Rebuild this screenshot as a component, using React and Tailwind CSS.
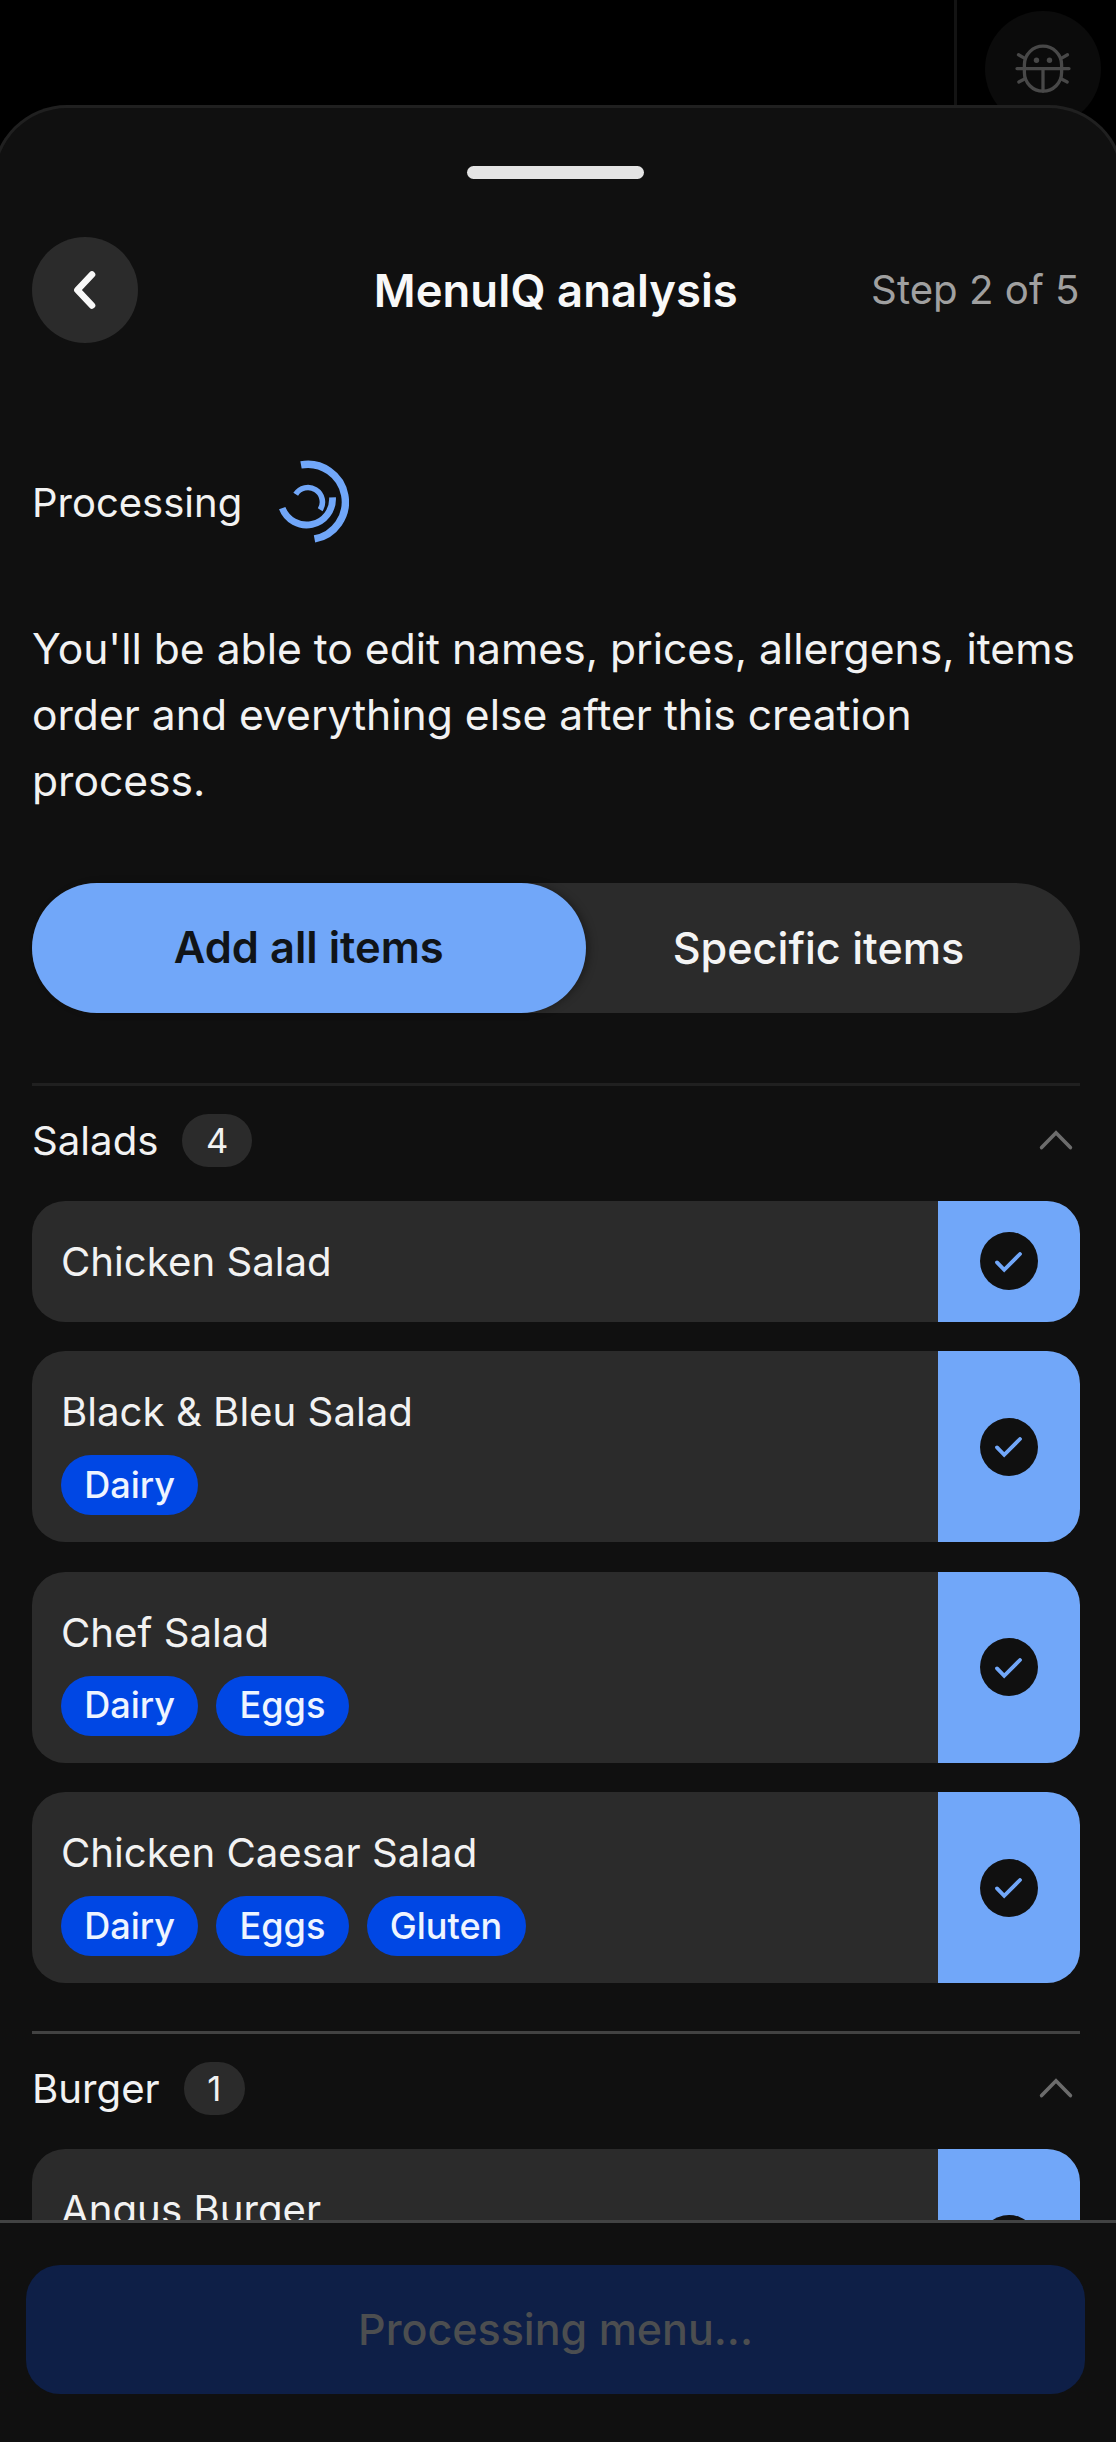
import { useState } from 'react';

const sections = [
  {
    name: 'Salads',
    count: 4,
    line: 'border-[#202020]',
    items: [
      { name: 'Chicken Salad', allergens: [] },
      { name: 'Black & Bleu Salad', allergens: ['Dairy'] },
      { name: 'Chef Salad', allergens: ['Dairy', 'Eggs'] },
      { name: 'Chicken Caesar Salad', allergens: ['Dairy', 'Eggs', 'Gluten'] },
    ],
  },
  {
    name: 'Burger',
    count: 1,
    line: 'border-[#424242]',
    items: [{ name: 'Angus Burger', allergens: [], tall: true }],
  },
];

function BugIcon() {
  return (
    <svg width="56" height="50" viewBox="0 0 56 50" fill="none" stroke="#484848" strokeWidth="3.3" strokeLinecap="round">
      <rect x="9.4" y="2.2" width="37.2" height="45" rx="18.6" />
      <path d="M2 24.6H54M28 24.6V47" />
      <path d="M3.5 10.8 9.8 14.4M52.5 10.8 46.2 14.4M3.8 38 10 34.8M52.2 38 46 34.8" />
      <circle cx="21.5" cy="16.2" r="2.7" fill="#484848" stroke="none" />
      <circle cx="34.5" cy="16.2" r="2.7" fill="#484848" stroke="none" />
    </svg>
  );
}

function Spinner() {
  return (
    <svg width="84" height="84" viewBox="-42 -42 84 84" fill="none" stroke="#71a7f9">
      <path d="M-6 -37.1A37.6 37.6 0 0 1 7.5 36.9" strokeWidth="7.4" />
      <path d="M25.5 -5.2A26 26 0 0 1 -24.8 5.5" strokeWidth="6.8" transform="translate(0 0.6)" />
      <path d="M-11.3 -7.4A13.5 13.5 0 0 1 13.2 8" strokeWidth="5.6" transform="translate(0 -0.3)" />
    </svg>
  );
}

function MenuItem({ item }) {
  const hasAllergens = item.allergens.length > 0;

  return (
    <div className={`flex shrink-0 overflow-hidden rounded-[33px] bg-[#2b2b2b] ${item.tall ? 'h-[191px]' : ''}`}>
      <div className={`flex-1 pl-[29px] pt-[33px] ${hasAllergens ? 'pb-[27px]' : 'pb-[33px]'}`}>
        <p className="text-[40.2px] leading-[55px] text-[#f2f2f2]">{item.name}</p>
        {hasAllergens && (
          <div className="mt-[16px] flex gap-[18px]">
            {item.allergens.map((allergen) => (
              <span
                key={allergen}
                className="flex h-[60px] items-center rounded-full bg-[#0047e4] px-[23.2px] text-[36.1px] font-medium text-[#eef4ff]"
              >
                {allergen}
              </span>
            ))}
          </div>
        )}
      </div>
      <div className="flex w-[141.5px] items-center justify-center bg-[#71a7f9]">
        <span className="flex size-[58px] items-center justify-center rounded-full bg-[#101010] pt-[2px]">
          <svg width="27" height="21" viewBox="0 0 27 21" fill="none" stroke="#71a7f9" strokeWidth="3.8">
            <path d="M2 10.4 9.2 17.8 25 2" strokeLinecap="round" />
          </svg>
        </span>
      </div>
    </div>
  );
}

function Section({ section }) {
  return (
    <section className={`border-t-[3px] ${section.line}`}>
      <div className="flex h-[109px] items-center justify-between">
        <div className="flex items-center gap-[24px]">
          <h2 className="pt-px text-[40.2px] text-[#f2f2f2]">{section.name}</h2>
          <span className="flex h-[53px] items-center rounded-full bg-[#2b2b2b] px-[23.5px] text-[34.6px] text-[#f2f2f2]">
            {section.count}
          </span>
        </div>
        <svg className="mr-[6px]" width="36" height="24" viewBox="0 0 36 24" fill="none" stroke="#6c6c6c" strokeWidth="3.6">
          <path d="M3.6 18.6 18 3.8 32.4 18.6" strokeLinecap="round" />
        </svg>
      </div>
      <div className="mt-[5.5px] flex flex-col gap-[29.5px]">
        {section.items.map((item) => (
          <MenuItem key={item.name} item={item} />
        ))}
      </div>
    </section>
  );
}

export default function App() {
  const [mode, setMode] = useState('all');

  const tabClass = (active) =>
    active
      ? 'bg-[#71a7f9] text-[#101418] font-semibold text-[43.5px] w-[553.5px] shadow-[5px_0_8px_-2px_rgba(0,0,0,0.35)]'
      : 'text-[#f4f4f4] font-medium text-[43.2px] flex-1';

  return (
    <div className="flex h-[2442px] w-full flex-col overflow-hidden bg-black font-['Inter',sans-serif]">
      {/* Page behind the sheet */}
      <div className="flex h-[105px] shrink-0 justify-end">
        <div className="w-[162px] border-l-[3px] border-[#131313] pl-[28px] pt-[11px]">
          <div className="flex size-[116px] items-center justify-center rounded-full bg-[#0b0b0b]">
            <BugIcon />
          </div>
        </div>
      </div>

      {/* Bottom sheet */}
      <div className="relative -mx-[8px] flex min-h-0 flex-1 flex-col rounded-t-[75px] border-3 border-b-0 border-[#202020] bg-[#101010]">
        <div className="min-h-0 flex-1 overflow-hidden pl-[37px] pr-[41.5px] pt-[58px]">
          <div className="mx-auto h-[13px] w-[177px] rounded-full bg-[#e4e4e4]" />

          <div className="mt-[58px] grid h-[106px] grid-cols-[1fr_auto_1fr] items-center">
            <button className="flex size-[106px] items-center justify-center rounded-full bg-[#2b2b2b]">
              <svg width="26" height="40" viewBox="0 0 26 40" fill="none" stroke="#f8f8f8" strokeWidth="6.6">
                <path d="M20 4.6 5.4 20 20 35.4" strokeLinecap="round" strokeLinejoin="round" />
              </svg>
            </button>
            <h1 className="pt-[2px] text-[45.4px] font-semibold text-[#f8f8f8]">MenuIQ analysis</h1>
            <span className="pt-px text-right text-[40.2px] text-[#a0a0a0]">Step 2 of 5</span>
          </div>

          <div className="mt-[117px] flex h-[84px] items-center gap-[23px]">
            <span className="pt-px text-[40px] text-[#f2f2f2]">Processing</span>
            <Spinner />
          </div>

          <p className="mt-[72px] text-[42.6px] leading-[66px] text-[#f2f2f2]">
            You'll be able to edit names, prices, allergens, items
            <br />
            order and everything else after this creation
            <br />
            process.
          </p>

          <div className="mt-[69px] flex h-[130px] rounded-full bg-[#2b2b2b]">
            <button onClick={() => setMode('all')} className={`rounded-full ${tabClass(mode === 'all')}`}>
              Add all items
            </button>
            <button onClick={() => setMode('specific')} className={`rounded-full pr-[28px] ${tabClass(mode === 'specific')}`}>
              Specific items
            </button>
          </div>

          <div className="mt-[70px] flex flex-col gap-[48px]">
            {sections.map((section) => (
              <Section key={section.name} section={section} />
            ))}
          </div>
        </div>

        <div className="h-[222px] shrink-0 border-t-[3px] border-[#424343] pl-[31px] pr-[36px] pt-[41.5px]">
          <button className="h-[129.5px] w-full rounded-[34px] bg-[#0e1f47] text-[43px] font-medium text-[#4c4e50]" disabled>
            Processing menu...
          </button>
        </div>
      </div>
    </div>
  );
}
